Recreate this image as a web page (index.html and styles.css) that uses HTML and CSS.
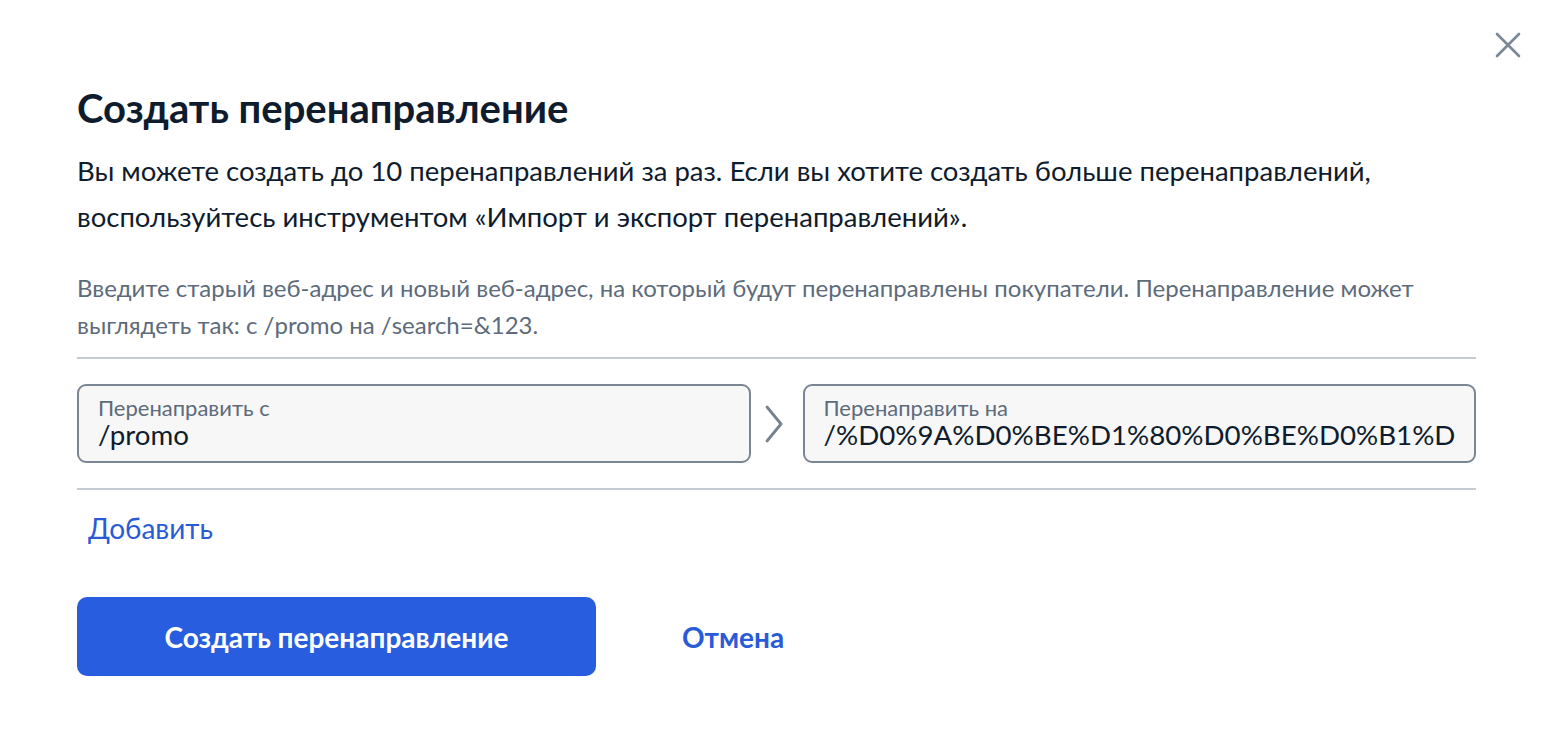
FILE: index.html
```html
<!DOCTYPE html>
<html lang="ru">
<head>
<meta charset="UTF-8" />
<meta name="viewport" content="width=device-width, initial-scale=1.0"/>
<title>Создать перенаправление</title>
<link rel="stylesheet" href="styles.css">
</head>
<body>
<div class="modal">
  <button class="close" aria-label="Закрыть">
    <svg width="26" height="26" viewBox="0 0 26 26"><path d="M2 2L24 24M24 2L2 24" stroke="#7a8796" stroke-width="2.6" stroke-linecap="round"/></svg>
  </button>
  <h1>Создать перенаправление</h1>
  <p class="lead">Вы можете создать до 10 перенаправлений за раз. Если вы хотите создать больше перенаправлений, воспользуйтесь инструментом «Импорт и экспорт перенаправлений».</p>
  <p class="hint">Введите старый веб-адрес и новый веб-адрес, на который будут перенаправлены покупатели. Перенаправление может выглядеть так: с /promo на /search=&amp;123.</p>
  <div class="row">
    <label class="field">
      <span class="label">Перенаправить с</span>
      <span class="value">/promo</span>
    </label>
    <div class="arrow">
      <svg width="20" height="38" viewBox="0 0 20 38"><path d="M3 2L17 19L3 36" fill="none" stroke="#76838f" stroke-width="2.8" stroke-linecap="round" stroke-linejoin="round"/></svg>
    </div>
    <label class="field">
      <span class="label">Перенаправить на</span>
      <span class="value">/%D0%9A%D0%BE%D1%80%D0%BE%D0%B1%D</span>
    </label>
  </div>
  <a class="add" href="#">Добавить</a>
  <div class="actions">
    <button class="primary">Создать перенаправление</button>
    <button class="cancel">Отмена</button>
  </div>
</div>
</body>
</html>
```

FILE: styles.css
```css
body {
  margin: 0;
  padding: 0;
  background: #fff;
  font-family: Lato, "Open Sans", sans-serif;
  color: #0f1c2d;
}

.modal {
  position: relative;
  padding: 82px 72px 0 77px;
}

.close {
  position: absolute;
  top: 32px;
  right: 27px;
  width: 26px;
  height: 26px;
  padding: 0;
  border: 0;
  background: none;
  cursor: pointer;
}

h1 {
  margin: 0;
  font-size: 40px;
  font-weight: 700;
  line-height: 52px;
  color: #0f1c2d;
}

.lead {
  margin: 14px 0 0;
  font-size: 27.5px;
  line-height: 46px;
  color: #0f1c2d;
}

.hint {
  margin: 29px 0 0;
  padding-bottom: 14px;
  font-size: 24px;
  line-height: 37px;
  color: #5d6b7b;
  border-bottom: 2px solid #c4cbd2;
}

.row {
  display: flex;
  align-items: center;
  padding: 25px 0 25px;
  border-bottom: 2px solid #c4cbd2;
}

.field {
  flex: 1;
  min-width: 0;
  height: 79px;
  box-sizing: border-box;
  display: flex;
  flex-direction: column;
  justify-content: center;
  padding: 0 17px 0 19px;
  border: 2px solid #7b8694;
  border-radius: 9px;
  background: #f7f7f7;
}

.label {
  font-size: 22px;
  line-height: 22px;
  color: #5d6b7b;
  white-space: nowrap;
}

.value {
  font-size: 27.7px;
  line-height: 32px;
  color: #0f1c2d;
  white-space: nowrap;
  overflow: hidden;
}

.arrow {
  width: 52px;
  flex: none;
  display: flex;
  justify-content: center;
  padding-right: 6px;
  box-sizing: border-box;
}

.add {
  display: inline-block;
  margin: 22px 0 0 11px;
  font-size: 28px;
  line-height: 32px;
  color: #2a5bd7;
  text-decoration: none;
}

.actions {
  display: flex;
  align-items: center;
  margin-top: 53px;
}

.primary {
  width: 519px;
  height: 79px;
  border: 0;
  border-radius: 10px;
  background: #275dde;
  color: #fff;
  font-family: Lato, sans-serif;
  font-size: 28px;
  font-weight: 700;
  cursor: pointer;
}

.cancel {
  margin-left: 86px;
  padding: 0;
  border: 0;
  background: none;
  color: #2a5bd7;
  font-family: Lato, sans-serif;
  font-size: 28px;
  font-weight: 700;
  cursor: pointer;
}
```
